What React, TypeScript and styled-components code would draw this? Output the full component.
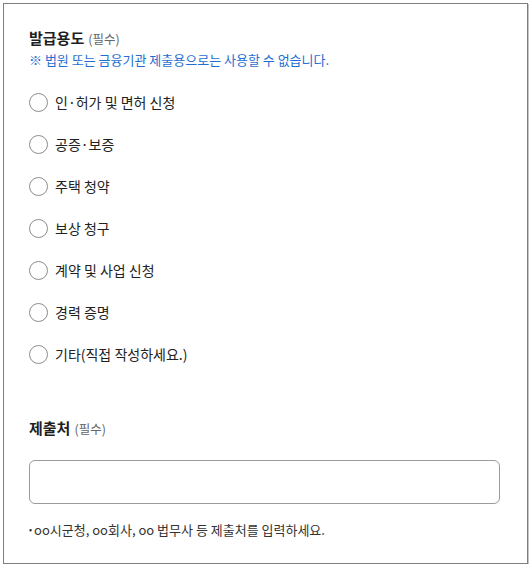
import styled, { createGlobalStyle } from 'styled-components';

const GlobalStyle = createGlobalStyle`
	html, body {
		margin: 0;
		padding: 0;
		background: #ffffff;
	}
	body {
		font-family: "Noto Sans CJK KR", "Noto Sans", sans-serif;
		color: #222222;
	}
`;

const Frame = styled.div`
	box-sizing: border-box;
	margin: 3px 0 0 3px;
	width: 525px;
	height: 561px;
	border: 1px solid #7e7e7e;
	box-shadow: 1px 1px 0 #c4c4c4;
	padding: 23px 25px 0 25px;
`;

const Section = styled.section`
	display: flex;
	flex-direction: column;
`;

const Title = styled.h2`
	margin: 0;
	font-size: 15px;
	font-weight: 700;
	line-height: 22px;
	color: #1f1f1f;
`;

const Required = styled.span`
	margin-left: 4px;
	font-size: 12.5px;
	font-weight: 400;
	color: #666666;
`;

const Notice = styled.p`
	margin: 0;
	font-size: 13px;
	line-height: 20px;
	color: #1f6fd1;
`;

const OptionList = styled.div`
	display: flex;
	flex-direction: column;
	gap: 22px;
	margin-top: 22px;
`;

const OptionRow = styled.label`
	display: flex;
	align-items: center;
	gap: 7px;
	height: 20px;
	font-size: 14px;
	color: #222222;
	cursor: pointer;
`;

const RadioCircle = styled.span`
	box-sizing: border-box;
	width: 19px;
	height: 19px;
	border-radius: 50%;
	border: 1px solid #8c8c8c;
	background: #ffffff;
	flex-shrink: 0;
`;

const SubmitSection = styled(Section)`
	margin-top: 53px;
`;

const TextBox = styled.input`
	box-sizing: border-box;
	margin-top: 20px;
	width: 471px;
	height: 44px;
	border: 1px solid #9a9a9a;
	border-radius: 6px;
	padding: 0 12px;
	font-family: inherit;
	font-size: 14px;
	outline: none;
`;

const Hint = styled.p`
	margin: 17px 0 0 0;
	font-size: 13px;
	line-height: 18px;
	color: #333333;
`;

const Bullet = styled.span`
	display: inline-block;
	margin-right: 2px;
	font-size: 9px;
	vertical-align: 2px;
`;

const options = [
	'인·허가 및 면허 신청',
	'공증·보증',
	'주택 청약',
	'보상 청구',
	'계약 및 사업 신청',
	'경력 증명',
	'기타(직접 작성하세요.)',
];

const App = () => {
	return (
		<>
			<GlobalStyle />
			<Frame>
				<Section>
					<Title>
						발급용도<Required>(필수)</Required>
					</Title>
					<Notice>※ 법원 또는 금융기관 제출용으로는 사용할 수 없습니다.</Notice>
					<OptionList>
						{options.map((option) => (
							<OptionRow key={option}>
								<RadioCircle />
								{option}
							</OptionRow>
						))}
					</OptionList>
				</Section>
				<SubmitSection>
					<Title>
						제출처<Required>(필수)</Required>
					</Title>
					<TextBox type="text" />
					<Hint>
						<Bullet>•</Bullet>oo시군청, oo회사, oo 법무사 등 제출처를 입력하세요.
					</Hint>
				</SubmitSection>
			</Frame>
		</>
	);
};

export default App;
